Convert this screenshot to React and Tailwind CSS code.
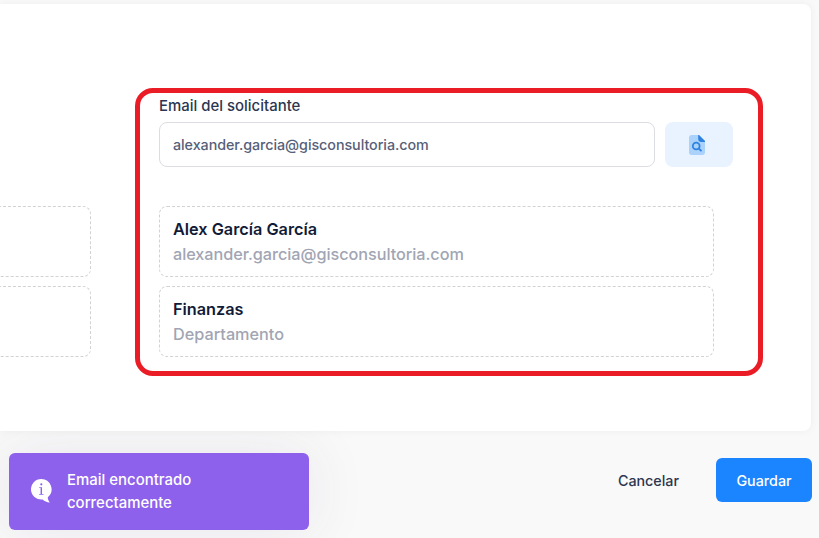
function SearchFileIcon() {
  return (
    <svg width="16" height="20" viewBox="0 0 16 20" fill="none">
      <path d="M0 2.5C0 1.1 1.1 0 2.5 0H10L16 6V17.5C16 18.9 14.9 20 13.5 20H2.5C1.1 20 0 18.9 0 17.5Z" fill="#abd2fb" />
      <path d="M9.2 0H10L16 6V7H12.2C10.500 7 9.200 5.700 9.200 4Z" fill="#2f83e0" />
      <circle cx="7.200" cy="11" r="3.400" stroke="#2f83e0" strokeWidth="1.800" />
      <path d="M9.800 13.600L11.900 15.500" stroke="#2f83e0" strokeWidth="1.900" strokeLinecap="round" />
    </svg>
  );
}

function InfoBubbleIcon() {
  return (
    <svg width="21" height="24" viewBox="0 0 21 24">
      <path d="M10.300 0A10.300 10.300 0 0 1 16.800 18.200C16.800 20 17.500 22 18.800 23.500C16 23.300 13.300 22.300 11.700 20.500A10.300 10.300 0 1 1 10.300 0Z" fill="#fff" />
      <circle cx="10.300" cy="5.300" r="1.100" fill="#8b61ea" />
      <path d="M8.200 8.300H11V14.900H12.500V15.700H8.200V14.900H9.600V9.100H8.200Z" fill="#8b61ea" />
    </svg>
  );
}

function DashedCard({ title, subtitle }) {
  return (
    <div className="flex h-[71px] w-full flex-col justify-center rounded-lg border border-dashed border-[#d2d2d5] px-[13px] text-[16.250px] leading-[25px]">
      {title && <div className="font-semibold text-[#111b37]">{title}</div>}
      {subtitle && <div className="font-medium text-[#a1a5b3]">{subtitle}</div>}
    </div>
  );
}

export default function App() {
  return (
    <div className="relative flex h-[538px] w-[819px] flex-col overflow-hidden bg-[#f9f9f9] pt-1 font-['Inter',sans-serif]">
      <main className="relative z-10 flex h-[427px] w-[811px] shrink-0 rounded-r-lg bg-white shadow-[0_0_8px_rgba(0,0,0,0.05)]">
        <section className="mt-[202px] flex w-[91px] shrink-0 flex-col gap-[9px]">
          <div className="-ml-5">
            <DashedCard />
          </div>
          <div className="-ml-5">
            <DashedCard />
          </div>
        </section>
        <section className="ml-[68px] w-[574px] pt-[91px]">
          <label className="block h-[27px] text-[14.950px] leading-[22px] font-medium text-[#2c3650]">Email del solicitante</label>
          <div className="flex gap-[10px]">
            <div className="flex h-[45px] w-[496px] items-center rounded-lg border border-[#dcdde2] px-[13px] text-[14.300px] font-medium tracking-[-0.050px] text-[#566079]">
              alexander.garcia@gisconsultoria.com
            </div>
            <button className="flex h-[45px] w-[68px] items-center justify-center rounded-lg bg-[#e8f3ff] pr-1" aria-label="Buscar">
              <SearchFileIcon />
            </button>
          </div>
          <div className="mt-[39px] flex w-[555px] flex-col gap-[9px]">
            <DashedCard title="Alex García García" subtitle={<span className="tracking-[-0.050px]">alexander.garcia@gisconsultoria.com</span>} />
            <DashedCard title="Finanzas" subtitle="Departamento" />
          </div>
        </section>
      </main>
      <footer className="flex justify-end pt-[27px] pr-[7px] text-[14.300px] font-medium">
        <button className="mr-[17px] h-[44px] px-5 pt-[2px] text-[#2c3650]">Cancelar</button>
        <button className="h-[44px] w-[96px] rounded-md bg-[#1b84ff] pt-[2px] text-white">Guardar</button>
      </footer>
      <div className="absolute top-[453px] left-[9px] flex h-[77px] w-[300px] items-center rounded-md bg-[#8e61ec] pl-[22px] text-white shadow-[0_0_60px_rgba(82,63,105,0.1)]">
        <div className="pb-[2px]">
          <InfoBubbleIcon />
        </div>
        <p className="ml-[15px] w-[180px] text-[14.950px] leading-[23px] font-medium">Email encontrado correctamente</p>
      </div>
      <div className="pointer-events-none absolute top-[88px] left-[135px] z-20 h-[288px] w-[628px] rounded-[18px] border-[5px] border-[#ea1c26]" />
    </div>
  );
}
